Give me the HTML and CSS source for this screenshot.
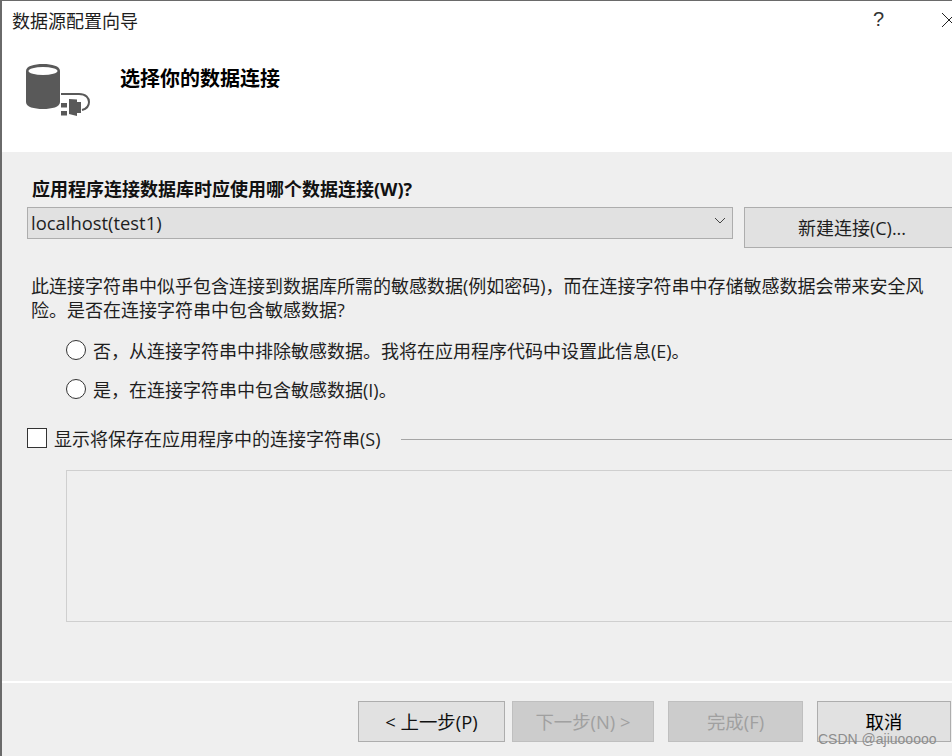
FILE: index.html
```html
<!DOCTYPE html>
<html lang="zh-CN">
<head>
<meta charset="utf-8">
<title>数据源配置向导</title>
<link rel="stylesheet" href="styles.css">
</head>
<body>
<div class="window">
  <header class="header">
    <div class="titlebar">
      <span class="title">数据源配置向导</span>
      <span class="help">?</span>
      <svg class="close" width="16" height="16" viewBox="0 0 16 16"><path d="M1 1 L15 15 M15 1 L1 15" stroke="#222" stroke-width="1" fill="none"/></svg>
    </div>
    <div class="banner">
      <svg class="db-icon" width="66" height="56" viewBox="0 0 66 56">
        <path d="M1 7 C1 2 9 0 18 0 C27 0 35 2 35 7 V38 C35 43 27 45 18 45 C9 45 1 43 1 38 Z" fill="#595959"/>
        <ellipse cx="18" cy="7" rx="14.5" ry="4" fill="#fff"/>
        <path d="M36 30 H54 C61 30 64 34 64 38 C64 42 61 45 57 46" fill="none" stroke="#595959" stroke-width="2"/>
        <path d="M44 38 L52 38.500 V55 L44 53 Z" transform="translate(0 -3)" fill="#595959"/>
        <path d="M52 38 H56 V49 H52 Z" fill="#595959"/>
        <rect x="36" y="39" width="6" height="4.500" fill="#595959"/>
        <rect x="36" y="47" width="6" height="4.500" fill="#595959"/>
      </svg>
      <h1 class="heading">选择你的数据连接</h1>
    </div>
  </header>
  <main class="content">
    <h2 class="label">应用程序连接数据库时应使用哪个数据连接(W)?</h2>
    <div class="connection-row">
      <div class="combo">
        <span>localhost(test1)</span>
        <svg width="12" height="8" viewBox="0 0 12 8"><path d="M1 1 L6 6 L11 1" fill="none" stroke="#444" stroke-width="1"/></svg>
      </div>
      <div class="btn new-btn">新建连接(C)...</div>
    </div>
    <p class="desc">此连接字符串中似乎包含连接到数据库所需的敏感数据(例如密码)，而在连接字符串中存储敏感数据会带来安全风险。是否在连接字符串中包含敏感数据?</p>
    <div class="radio-row first"><span class="radio"></span><span>否，从连接字符串中排除敏感数据。我将在应用程序代码中设置此信息(E)。</span></div>
    <div class="radio-row"><span class="radio"></span><span>是，在连接字符串中包含敏感数据(I)。</span></div>
    <div class="check-row"><span class="check"></span><span>显示将保存在应用程序中的连接字符串(S)</span><span class="rule"></span></div>
    <div class="conn-box"></div>
  </main>
  <footer class="footer">
    <div class="btn nav prev">&lt; 上一步(P)</div>
    <div class="btn nav next disabled">下一步(N) &gt;</div>
    <div class="btn nav finish disabled">完成(F)</div>
    <div class="btn nav cancel">取消</div>
  </footer>
  <div class="watermark">CSDN @ajiuooooo</div>
</div>
</body>
</html>
```
FILE: styles.css
```css
* { box-sizing: border-box; }
html, body { margin: 0; padding: 0; background: #efefef; }
body {
  font-family: "Open Sans", "Noto Sans CJK SC", sans-serif;
  font-size: 18px;
  color: #1e1e1e;
}
.window {
  position: relative;
  width: 952px;
  height: 756px;
  overflow: hidden;
  background: #efefef;
  border-left: 2px solid #6a6a6a;
  border-top: 1px solid #6a6a6a;
}
.header { height: 151px; background: #fff; }
.titlebar {
  display: flex;
  align-items: center;
  height: 43px;
  padding: 0 0 6px 10px;
}
.title { flex: none; width: 861px; }
.help { flex: none; font-family: "Liberation Sans", sans-serif; font-size: 20px; width: 68px; color: #333; }
.close { flex: none; margin-top: 1px; }
.banner { display: flex; align-items: flex-start; padding: 20px 0 0 23px; }
.db-icon { flex: none; }
.heading {
  margin: 0 0 0 29px;
  font-size: 20px;
  line-height: 28px;
  font-weight: 700;
  color: #000;
  font-family: "Noto Sans CJK SC", sans-serif;
}
.content { height: 531px; padding: 24px 0 0 25px; border-bottom: 2px solid #fff; }
.label {
  margin: 0 0 0 5px;
  font-size: 18px;
  line-height: 26px;
  font-weight: 700;
  color: #111;
}
.connection-row { display: flex; align-items: flex-start; margin-top: 5px; }
.combo {
  display: flex;
  flex: none;
  align-items: center;
  justify-content: space-between;
  width: 706px;
  height: 32px;
  padding: 0 6px 2px 3px;
  background: #e1e1e1;
  border: 1px solid #adadad;
  font-size: 18.4px;
}
.combo svg { margin-top: -2px; }
.btn {
  display: flex;
  align-items: center;
  justify-content: center;
  background: #e1e1e1;
  border: 1px solid #adadad;
  flex: none;
}
.new-btn { width: 240px; height: 41px; margin: 0 0 0 11px; padding: 0 24px 1px 0; }
.desc { width: 900px; margin: 26px 0 0 4px; line-height: 24px; }
.radio-row { display: flex; align-items: center; gap: 7px; height: 24px; margin: 15px 0 0 39px; }
.radio-row.first { margin-top: 16px; }
.radio {
  flex: none;
  width: 20px;
  height: 20px;
  border: 1px solid #333;
  border-radius: 50%;
  background: #fff;
}
.check-row { display: flex; align-items: center; height: 24px; margin-top: 25px; }
.check { flex: none; width: 20px; height: 20px; margin-right: 7px; border: 1px solid #333; background: #fff; }
.rule { flex: 1; height: 1px; margin: 2px 0 0 20px; background: #a5a5a5; }
.conn-box { width: 900px; height: 152px; margin: 20px 0 0 39px; border: 1px solid #cfcfcf; border-right: 0; }
.footer { display: flex; align-items: flex-start; padding: 18px 0 0 356px; }
.nav { height: 41px; font-size: 18.4px; padding-bottom: 1px; }
.prev { width: 147px; color: #111; }
.next { width: 142px; margin-left: 7px; }
.finish { width: 135px; margin-left: 14px; }
.cancel { width: 134px; margin-left: 14px; color: #000; }
.disabled { background: #cccccc; border-color: #bfbfbf; color: #a0a0a0; }
.watermark {
  position: absolute;
  left: 816px;
  top: 729px;
  font-family: "Liberation Sans", sans-serif;
  font-size: 14px;
  line-height: 18px;
  white-space: nowrap;
  color: #8d8d8d;
}
```
